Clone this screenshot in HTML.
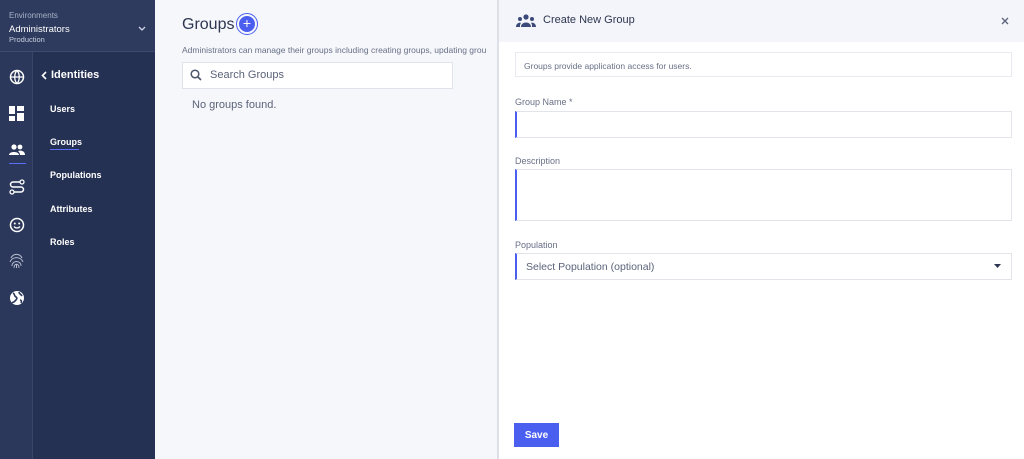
<!DOCTYPE html>
<html><head><style>
*{box-sizing:border-box;margin:0;padding:0}
body{width:1024px;height:459px;overflow:hidden;font-family:"Liberation Sans",sans-serif;background:#f6f7fb;position:relative}
.sb{position:absolute;left:0;top:0;width:155px;height:459px;background:#253152}
.env{position:absolute;left:0;top:0;width:155px;height:52px;background:#2e3b5e;border-bottom:1px solid #3f4b6c}
.icons{position:absolute;left:0;top:52px;width:33px;height:407px;background:#2b385b;border-right:1px solid #3a4667}
.t{position:absolute;color:#fff;font-size:9px;font-weight:bold}
.ic{position:absolute;left:9px}
.main{position:absolute;left:155px;top:0;width:342px;height:459px;background:#f6f7fb}
.panel{position:absolute;left:497px;top:0;width:527px;height:459px;background:#fff;border-left:2px solid #dde0e8}
.ph{position:absolute;left:0;top:0;right:0;height:42px;background:#f4f5fa}
.lbl{position:absolute;left:16px;font-size:9px;color:#687087}
.inp{position:absolute;left:16px;width:497px;border:1px solid #e2e4ea;border-left:2px solid #4a5ff0;background:#fff}
</style></head><body>
<div class="sb">
<div class="env">
<div style="position:absolute;left:9px;top:11px;font-size:8px;color:#a9b1c6">Environments</div>
<div style="position:absolute;left:9px;top:24px;font-size:9.5px;color:#fff">Administrators</div>
<div style="position:absolute;left:9px;top:35px;font-size:7.5px;color:#c7cde0">Production</div>
<svg style="position:absolute;left:138px;top:26px" width="8" height="6"><path d="M1 1l3 3 3-3" stroke="#cfd5e6" stroke-width="1.3" fill="none"/></svg>
</div>
<div class="icons">
<svg class="ic" style="top:17px" width="16" height="16" viewBox="0 0 16 16"><circle cx="8" cy="8" r="6.5" stroke="#fff" stroke-width="1.5" fill="none"/><path d="M1.5 8h13M8 1.5c-3 3-3 10 0 13M8 1.5c3 3 3 10 0 13" stroke="#fff" stroke-width="1.3" fill="none"/></svg>
<svg class="ic" style="top:54px" width="15" height="15"><rect x="0" y="0" width="6" height="8" fill="#fff"/><rect x="8" y="0" width="7" height="5" fill="#fff"/><rect x="0" y="10" width="6" height="5" fill="#fff"/><rect x="8" y="7" width="7" height="8" fill="#fff"/></svg>
<svg class="ic" style="top:92px" width="16" height="12"><circle cx="5" cy="3" r="2.6" fill="#fff"/><circle cx="11" cy="3" r="2.4" fill="#fff"/><path d="M0 11c0-4 10-4 10 0zM9 7c3-1 7 0 7 4h-5c0-2-1-3-2-4z" fill="#fff"/></svg>
<div style="position:absolute;left:9px;top:111px;width:17px;height:1px;background:#5b6ef5"></div>
<svg class="ic" style="top:127px" width="16" height="16"><circle cx="13" cy="3" r="2" stroke="#fff" fill="none" stroke-width="1.3"/><circle cx="3" cy="13" r="2" stroke="#fff" fill="none" stroke-width="1.3"/><path d="M11 3H4a2.5 2.5 0 000 5h8a2.5 2.5 0 010 5H5" stroke="#fff" stroke-width="1.5" fill="none"/></svg>
<svg class="ic" style="top:165px" width="16" height="16"><circle cx="8" cy="8" r="6.5" stroke="#fff" stroke-width="1.5" fill="none"/><circle cx="5.8" cy="6.5" r="1" fill="#fff"/><circle cx="10.2" cy="6.5" r="1" fill="#fff"/><path d="M5 9.5c1.5 2 4.5 2 6 0" stroke="#fff" stroke-width="1.3" fill="none"/></svg>
<svg class="ic" style="top:201px" width="15" height="16"><g stroke="#b6bccd" stroke-width="1" fill="none"><path d="M2 5a6 6 0 0111 0M1 9a7 7 0 0113 0M3 13c0-6 9-6 9 0M5 15c0-5 5-5 5 0M7.5 11v4"/></g></svg>
<svg class="ic" style="top:238px" width="16" height="16"><circle cx="8" cy="8" r="7" fill="#fff"/><path d="M4 3c2 1 1 3 3 4s0 3-1 4-2 2-3 1M10 2c0 2 2 2 3 4M11 10c1 0 2 1 1 3" stroke="#2b385b" stroke-width="1.6" fill="none"/></svg>
</div>
<svg style="position:absolute;left:41px;top:71px" width="6" height="9"><path d="M5 1L1.5 4.5 5 8" stroke="#fff" stroke-width="1.6" fill="none"/></svg>
<div class="t" style="left:51px;top:69px;font-size:11px">Identities</div>
<div class="t" style="left:50px;top:104px">Users</div>
<div class="t" style="left:50px;top:137px">Groups</div>
<div style="position:absolute;left:50px;top:149px;width:29px;height:1px;background:#5b6ef5"></div>
<div class="t" style="left:50px;top:170px">Populations</div>
<div class="t" style="left:50px;top:204px">Attributes</div>
<div class="t" style="left:50px;top:237px">Roles</div>
</div>
<div class="main">
<div style="position:absolute;left:27px;top:16px;font-size:16px;color:#2d3650">Groups</div>
<div style="position:absolute;left:81px;top:13px;width:22px;height:22px;border-radius:50%;border:1px solid #4a5ff0;padding:2px"><div style="width:16px;height:16px;border-radius:50%;background:#4a5ff0;color:#fff;font-size:14px;line-height:15px;text-align:center">+</div></div>
<div style="position:absolute;left:27px;top:45px;font-size:8.5px;color:#687087;white-space:nowrap">Administrators can manage their groups including creating groups, updating grou</div>
<div style="position:absolute;left:27px;top:62px;width:271px;height:27px;background:#fff;border:1px solid #dfe2ea"></div>
<svg style="position:absolute;left:35px;top:69px" width="12" height="12"><circle cx="5" cy="5" r="3.8" stroke="#4e566e" stroke-width="1.5" fill="none"/><path d="M8 8l3 3" stroke="#4e566e" stroke-width="1.6"/></svg>
<div style="position:absolute;left:55px;top:69px;font-size:11px;color:#5b637a">Search Groups</div>
<div style="position:absolute;left:37px;top:99px;font-size:11px;color:#5b637a">No groups found.</div>
</div>
<div class="panel">
<div class="ph">
<svg style="position:absolute;left:17px;top:14px" width="20" height="14"><circle cx="10" cy="3" r="2.6" fill="#3b4a7a"/><circle cx="4" cy="5" r="2" fill="#3b4a7a"/><circle cx="16" cy="5" r="2" fill="#3b4a7a"/><path d="M5 13c0-6 10-6 10 0zM0 13c0-4 4-5 5-4-1 1-1 2-1 4zM20 13c0-4-4-5-5-4 1 1 1 2 1 4z" fill="#3b4a7a"/></svg>
<div style="position:absolute;left:44px;top:14px;font-size:11px;color:#2d3650">Create New Group</div>
<svg style="position:absolute;left:502px;top:17px" width="8" height="8"><path d="M1 1l6 6M7 1l-6 6" stroke="#5b637a" stroke-width="1.3"/></svg>
</div>
<div style="position:absolute;left:16px;top:52px;width:497px;height:25px;border:1px solid #e8eaf0;font-size:8.5px;color:#687087;padding:8px 0 0 8px">Groups provide application access for users.</div>
<div class="lbl" style="top:97px">Group Name *</div>
<div class="inp" style="top:111px;height:27px"></div>
<div class="lbl" style="top:156px">Description</div>
<div class="inp" style="top:169px;height:52px"></div>
<div class="lbl" style="top:240px">Population</div>
<div class="inp" style="top:253px;height:27px;font-size:10.5px;color:#5b637a;padding:7px 0 0 9px">Select Population (optional)</div>
<svg style="position:absolute;left:495px;top:264px" width="7" height="5"><path d="M0 0h7L3.5 4z" fill="#2d3650"/></svg>
<div style="position:absolute;left:15px;top:423px;width:45px;height:24px;background:#4a5ff0;color:#fff;font-size:10px;font-weight:bold;text-align:center;line-height:25px">Save</div>
</div>
</body></html>
